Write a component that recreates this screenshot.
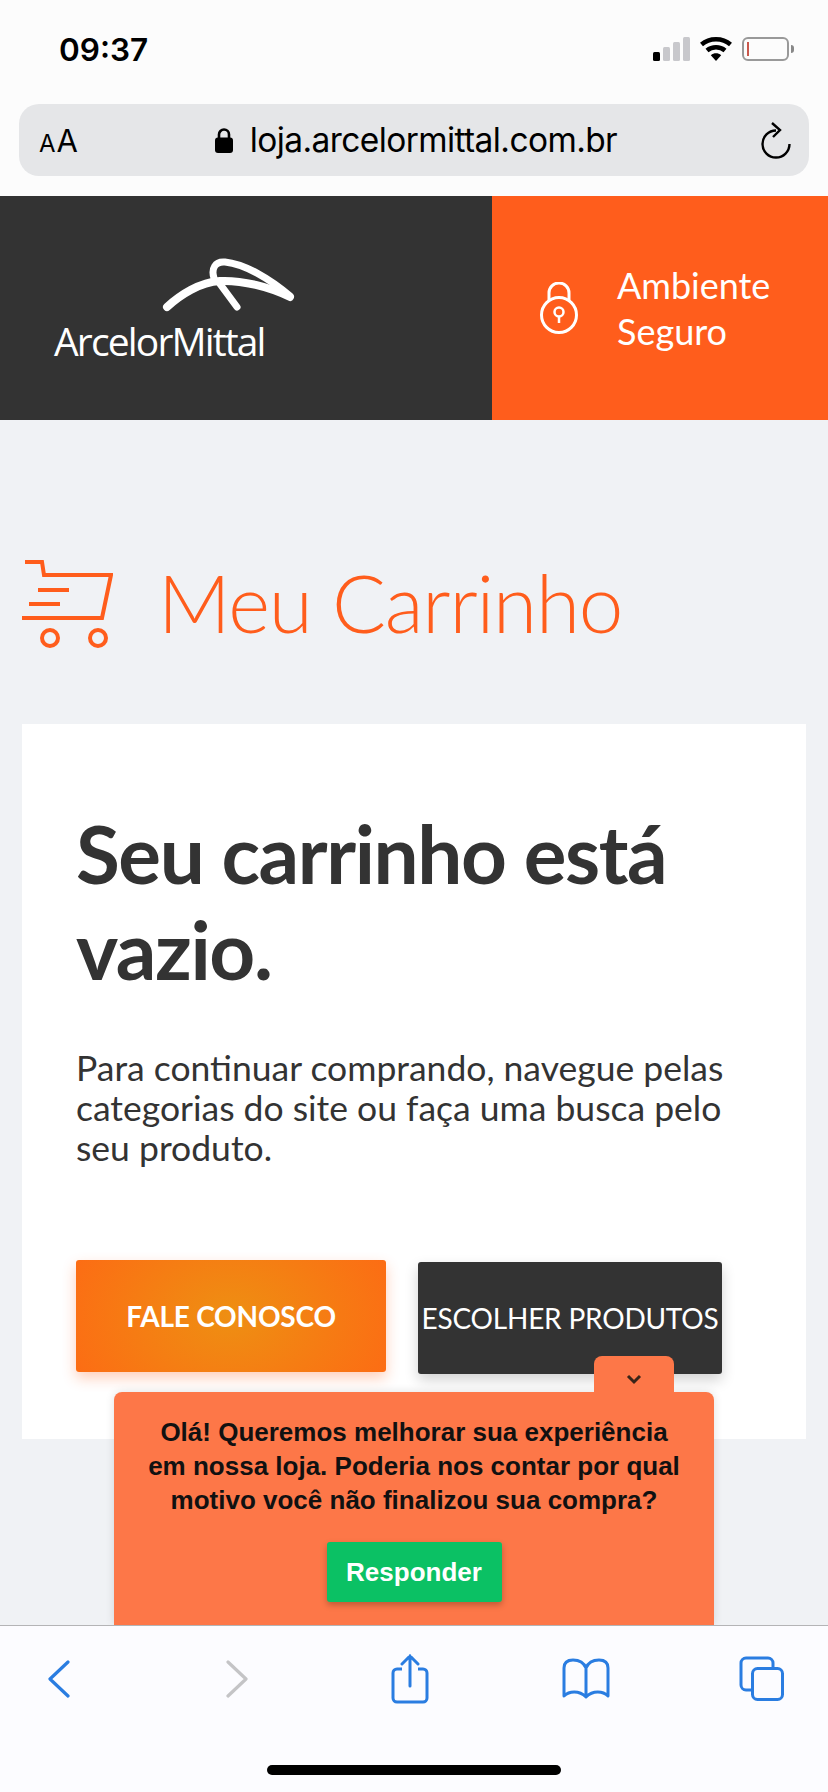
<script>
	// Safari chrome plus the empty-cart page underneath
</script>

<div class="phone">
	<header class="status">
		<span class="time">09:37</span>
		<div class="status-icons">
			<svg class="signal" width="37" height="24" viewBox="0 0 37 24" aria-hidden="true">
				<rect x="0" y="15" width="7" height="9" rx="1.5" fill="#000" />
				<rect x="10" y="10" width="7" height="14" rx="1.5" fill="#c8c8cc" />
				<rect x="20" y="5" width="7" height="19" rx="1.5" fill="#c8c8cc" />
				<rect x="30" y="0" width="7" height="24" rx="1.5" fill="#c8c8cc" />
			</svg>
			<svg class="wifi" width="32" height="24" viewBox="0 0 32 24" aria-hidden="true">
				<path d="M1.5 7.5C9.5 0.5 22.5 0.5 30.5 7.5" fill="none" stroke="#000" stroke-width="4.5" />
				<path d="M7 13.5C12 9.2 20 9.2 25 13.5" fill="none" stroke="#000" stroke-width="4.5" />
				<path d="M10.8 18.2C14 15.6 18 15.6 21.2 18.2L16 24Z" fill="#000" />
			</svg>
			<div class="battery"><span class="charge"></span></div>
			<span class="nub"></span>
		</div>
	</header>

	<div class="address-wrap">
		<div class="address">
			<span class="aa"><small>A</small>A</span>
			<div class="url">
				<svg width="18" height="26" viewBox="0 0 18 26" aria-hidden="true">
					<path d="M4 12V7.5a5 5 0 0 1 10 0V12" fill="none" stroke="#000" stroke-width="2.6" />
					<rect x="0" y="10.5" width="18" height="15.5" rx="3" fill="#000" />
				</svg>
				<span>loja.arcelormittal.com.br</span>
			</div>
			<svg class="reload" width="30" height="38" viewBox="0 0 30 38" aria-hidden="true">
				<path d="M15 9.5A13.5 13.5 0 1 0 28.5 23" fill="none" stroke="#000" stroke-width="2.4" />
				<path d="M11 2l8 7-7 7" fill="none" stroke="#000" stroke-width="2.4" />
			</svg>
		</div>
	</div>

	<main class="page">
		<div class="site-header">
			<div class="brand">
				<svg class="brand-mark" width="160" height="70" viewBox="0 0 160 70" aria-hidden="true">
					<path d="M17 56C30 44 50 31 70 30C92 29 120 36 140 46" fill="none" stroke="#fff" stroke-width="8" stroke-linecap="round" />
					<path d="M140 45C120 28 95 13 75 11C65 10 61 18 64 27" fill="none" stroke="#fff" stroke-width="7" stroke-linecap="round" />
					<path d="M70 33L87 56" fill="none" stroke="#fff" stroke-width="7" stroke-linecap="round" />
				</svg>
				<span class="brand-name">ArcelorMittal</span>
			</div>
			<div class="secure">
				<svg width="40" height="52" viewBox="0 0 40 52" aria-hidden="true">
					<circle cx="20" cy="33" r="17.5" fill="none" stroke="#fff" stroke-width="3" />
					<path d="M10 19V11a10 10 0 0 1 20 0v8" fill="none" stroke="#fff" stroke-width="3" />
					<circle cx="20" cy="30" r="4.5" fill="none" stroke="#fff" stroke-width="2.5" />
					<path d="M20 34.5V41" stroke="#fff" stroke-width="2.5" />
				</svg>
				<span class="secure-label">Ambiente<br />Seguro</span>
			</div>
		</div>

		<div class="title-row">
			<svg class="cart" width="91" height="88" viewBox="0 0 91 88" aria-hidden="true">
				<path d="M3 2H20L22 15H89L80 58H0" fill="none" stroke="#ff5d1c" stroke-width="4" />
				<path d="M16 30H47M7 44H38" stroke="#ff5d1c" stroke-width="4" />
				<circle cx="28" cy="78" r="8" fill="none" stroke="#ff5d1c" stroke-width="4" />
				<circle cx="76" cy="78" r="8" fill="none" stroke="#ff5d1c" stroke-width="4" />
			</svg>
			<h1>Meu Carrinho</h1>
		</div>

		<section class="card">
			<h2>Seu carrinho está vazio.</h2>
			<p>Para continuar comprando, navegue pelas categorias do site ou faça uma busca pelo seu produto.</p>
			<div class="actions">
				<button class="contact" type="button">FALE CONOSCO</button>
				<button class="browse" type="button">ESCOLHER PRODUTOS</button>
			</div>
		</section>

		<aside class="survey">
			<div class="survey-tab">
				<svg width="16" height="11" viewBox="0 0 16 11" aria-hidden="true">
					<path d="M2 2l6 6 6-6" fill="none" stroke="#3a2418" stroke-width="3" />
				</svg>
			</div>
			<p>Olá! Queremos melhorar sua experiência em nossa loja. Poderia nos contar por qual motivo você não finalizou sua compra?</p>
			<button type="button">Responder</button>
		</aside>
	</main>

	<nav class="toolbar">
		<div class="tools">
			<svg width="22" height="38" viewBox="0 0 22 38" aria-hidden="true">
				<path d="M20 2L2 19l18 17" fill="none" stroke="#2a7de1" stroke-width="3.2" stroke-linecap="round" stroke-linejoin="round" />
			</svg>
			<svg width="22" height="38" viewBox="0 0 22 38" aria-hidden="true">
				<path d="M2 2l18 17L2 36" fill="none" stroke="#c4c4c6" stroke-width="3.2" stroke-linecap="round" stroke-linejoin="round" />
			</svg>
			<svg width="38" height="50" viewBox="0 0 38 50" aria-hidden="true">
				<path d="M11 15H6a4 4 0 0 0-4 4v25a4 4 0 0 0 4 4h26a4 4 0 0 0 4-4V19a4 4 0 0 0-4-4h-5" fill="none" stroke="#2a7de1" stroke-width="3" />
				<path d="M19 32V2M11 10l8-8 8 8" fill="none" stroke="#2a7de1" stroke-width="3" stroke-linecap="round" />
			</svg>
			<svg width="48" height="42" viewBox="0 0 48 42" aria-hidden="true">
				<path d="M24 10C22 5 17 2 11 2C5 2 2 5 2 10V38C7 33 17 32 24 39C31 32 41 33 46 38V10C46 5 43 2 37 2C31 2 26 5 24 10V38" fill="none" stroke="#2a7de1" stroke-width="3" stroke-linejoin="round" />
			</svg>
			<svg width="46" height="46" viewBox="0 0 46 46" aria-hidden="true">
				<path d="M13 34H7a5 5 0 0 1-5-5V7a5 5 0 0 1 5-5h22a5 5 0 0 1 5 5v5" fill="none" stroke="#2a7de1" stroke-width="3" />
				<rect x="13.5" y="12.5" width="30" height="31" rx="5" fill="none" stroke="#2a7de1" stroke-width="3" />
			</svg>
		</div>
		<span class="home-bar"></span>
	</nav>
</div>

<style>
	:global(body) {
		margin: 0;
		background: #fcfcfd;
	}

	.phone {
		display: flex;
		flex-direction: column;
		width: 828px;
		height: 1792px;
		overflow: hidden;
		font-family: Lato, sans-serif;
	}

	/* Status bar */
	.status {
		display: flex;
		align-items: center;
		justify-content: space-between;
		height: 104px;
		padding: 0 34px 6px 59px;
		box-sizing: border-box;
		background: #fcfcfc;
	}

	.time {
		font-family: Inter, sans-serif;
		font-size: 31.5px;
		font-weight: 600;
		color: #000;
	}

	.status-icons {
		display: flex;
		align-items: center;
	}

	.wifi {
		margin-left: 10px;
	}

	.battery {
		width: 47px;
		height: 24px;
		margin-left: 10px;
		padding: 3px 3px;
		border: 2px solid #999;
		border-radius: 6px;
		box-sizing: border-box;
	}

	.charge {
		display: block;
		width: 2px;
		height: 100%;
		background: #c9584c;
	}

	.nub {
		width: 3px;
		height: 8px;
		margin-left: 2px;
		border-radius: 0 4px 4px 0;
		background: #888;
	}

	/* Address bar */
	.address-wrap {
		height: 92px;
		padding: 0 19px;
		background: #fcfcfc;
	}

	.address {
		display: flex;
		align-items: center;
		height: 72px;
		padding: 0 18px 0 20px;
		border-radius: 20px;
		background: #e5e6e8;
	}

	.aa {
		width: 38px;
		font-family: Inter, sans-serif;
		font-size: 31px;
		color: #000;
	}

	.aa small {
		margin-right: 1px;
		font-size: 24px;
	}

	.url {
		display: flex;
		flex: 1;
		align-items: center;
		justify-content: center;
		gap: 17px;
		padding-right: 6px;
		font-family: Inter, sans-serif;
		font-size: 33.5px;
		letter-spacing: -0.6px;
		color: #000;
	}

	/* Page */
	.page {
		position: relative;
		flex: 1;
		background: #f0f2f5;
		overflow: hidden;
	}

	.site-header {
		display: flex;
		height: 224px;
	}

	.brand {
		display: flex;
		flex-direction: column;
		width: 492px;
		padding: 55px 0 0 54px;
		box-sizing: border-box;
		background: #333;
	}

	.brand-mark {
		margin-left: 96px;
	}

	.brand-name {
		margin-top: -3px;
		font-family: "Open Sans", sans-serif;
		font-size: 39px;
		line-height: 46px;
		font-weight: 400;
		letter-spacing: -1.85px;
		color: #fff;
	}

	.secure {
		display: flex;
		flex: 1;
		align-items: center;
		gap: 38px;
		padding-left: 47px;
		background: #ff5d1c;
	}

	.secure-label {
		font-size: 36px;
		line-height: 46px;
		color: #fff;
	}

	.title-row {
		display: flex;
		align-items: center;
		gap: 45px;
		padding: 139px 0 75px 22px;
	}

	h1 {
		margin: 0 0 4px;
		font-size: 80px;
		line-height: 86px;
		font-weight: 300;
		letter-spacing: -1.2px;
		color: #ff5d1c;
	}

	.card {
		height: 715px;
		margin: 0 22px;
		padding: 81px 54px 0;
		box-sizing: border-box;
		background: #fff;
	}

	h2 {
		margin: 0;
		font-size: 80px;
		line-height: 96px;
		font-weight: 700;
		letter-spacing: -1.4px;
		color: #333;
	}

	.card p {
		margin: 51px 0 0;
		font-size: 35.5px;
		line-height: 40px;
		color: #333;
	}

	.actions {
		display: flex;
		align-items: flex-start;
		gap: 32px;
		margin-top: 92px;
	}

	.actions button {
		height: 112px;
		padding: 0;
		border: 0;
		border-radius: 3px;
		font-family: Lato, sans-serif;
		font-size: 28px;
		white-space: nowrap;
		color: #fff;
	}

	.contact {
		width: 310px;
		font-weight: 700;
		letter-spacing: -0.2px;
		background: radial-gradient(ellipse 60% 120% at center, #ee8f12, #fd6a14);
		box-shadow: 0 6px 14px rgba(255, 93, 28, 0.3);
	}

	.browse {
		width: 304px;
		margin-top: 2px;
		letter-spacing: -0.2px;
		background: #333;
		box-shadow: 0 6px 14px rgba(0, 0, 0, 0.18);
	}

	/* Survey popup */
	.survey {
		position: absolute;
		left: 114px;
		bottom: 0;
		width: 600px;
		height: 233px;
		padding-top: 23px;
		box-sizing: border-box;
		border-radius: 8px 8px 0 0;
		background: #fd7748;
		box-shadow: 0 0 10px rgba(0, 0, 0, 0.12);
		text-align: center;
		font-family: "Liberation Sans", Arial, sans-serif;
	}

	.survey-tab {
		position: absolute;
		top: -36px;
		right: 40px;
		display: flex;
		align-items: center;
		justify-content: center;
		width: 80px;
		height: 36px;
		padding-top: 10px;
		box-sizing: border-box;
		border-radius: 8px 8px 0 0;
		background: #fd7748;
	}

	.survey p {
		margin: 0 30px;
		font-size: 26px;
		line-height: 34px;
		font-weight: 700;
		color: #111;
	}

	.survey button {
		width: 175px;
		height: 60px;
		margin-top: 25px;
		border: 0;
		border-radius: 3px;
		background: #0bc164;
		box-shadow: 0 3px 6px rgba(0, 0, 0, 0.25);
		font-family: "Liberation Sans", Arial, sans-serif;
		font-size: 26px;
		font-weight: 700;
		color: #fff;
	}

	/* Toolbar */
	.toolbar {
		display: flex;
		flex-direction: column;
		align-items: center;
		height: 167px;
		border-top: 1px solid #b4b4b6;
		box-sizing: border-box;
		background: #fcfcff;
	}

	.tools {
		display: flex;
		align-items: center;
		align-self: stretch;
		height: 106px;
		padding-left: 48px;
	}

	/* Safari spaces these unevenly */
	.tools svg:nth-child(2) {
		margin-left: 156px;
	}

	.tools svg:nth-child(3) {
		margin-left: 143px;
	}

	.tools svg:nth-child(4) {
		margin-left: 133px;
	}

	.tools svg:nth-child(5) {
		margin-left: 129px;
	}

	.home-bar {
		width: 294px;
		height: 10px;
		margin-top: 33px;
		border-radius: 5px;
		background: #000;
	}
</style>
